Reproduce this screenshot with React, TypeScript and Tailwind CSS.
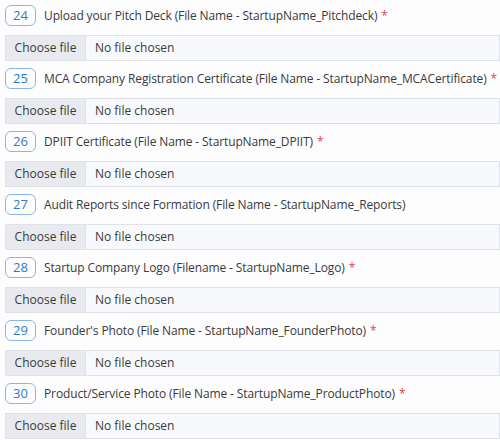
import React from "react";

interface DocField {
  no: number;
  label: string;
  required: boolean;
}

const fields: DocField[] = [
  { no: 24, label: "Upload your Pitch Deck (File Name - StartupName_Pitchdeck)", required: true },
  { no: 25, label: "MCA Company Registration Certificate (File Name - StartupName_MCACertificate)", required: true },
  { no: 26, label: "DPIIT Certificate (File Name - StartupName_DPIIT)", required: true },
  { no: 27, label: "Audit Reports since Formation (File Name - StartupName_Reports)", required: false },
  { no: 28, label: "Startup Company Logo (Filename - StartupName_Logo)", required: true },
  { no: 29, label: "Founder's Photo (File Name - StartupName_FounderPhoto)", required: true },
  { no: 30, label: "Product/Service Photo (File Name - StartupName_ProductPhoto)", required: true },
];

const FileRow = ({ field }: { field: DocField }) => {
  return (
    <div className="flex flex-col">
      <div className="flex items-center h-[21px] gap-[8px]">
        <span className="shrink-0 flex items-center justify-center w-[31px] h-[21px] rounded-[6px] border border-[#8ab6e6] text-[#2f7bc8] text-[13px]">
          {field.no}
        </span>
        <span className="text-[12px] tracking-[-0.12px] text-[#3a3a3a] whitespace-nowrap">
          {field.label}
          {field.required && <span className="text-[#e0424f] ml-[4px]">*</span>}
        </span>
      </div>
      <div className="mt-[9px] flex h-[26px] border border-[#dfe2e8] bg-[#f8f9fc] text-[12px] text-[#3a3a3a]">
        <div className="flex items-center justify-center w-[80px] bg-[#e8eaef] border-r border-[#dfe2e8]">
          Choose file
        </div>
        <div className="flex items-center pl-[9px]">No file chosen</div>
      </div>
    </div>
  );
};

export default function App() {
  return (
    <div
      className="w-[500px] h-[440px] overflow-hidden bg-[#fdfdfe] pl-[5px] pt-[5px] flex flex-col gap-[7px]"
      style={{ fontFamily: '"Open Sans", "Noto Sans", sans-serif' }}
    >
      {fields.map((f) => (
        <FileRow key={f.no} field={f} />
      ))}
    </div>
  );
}
